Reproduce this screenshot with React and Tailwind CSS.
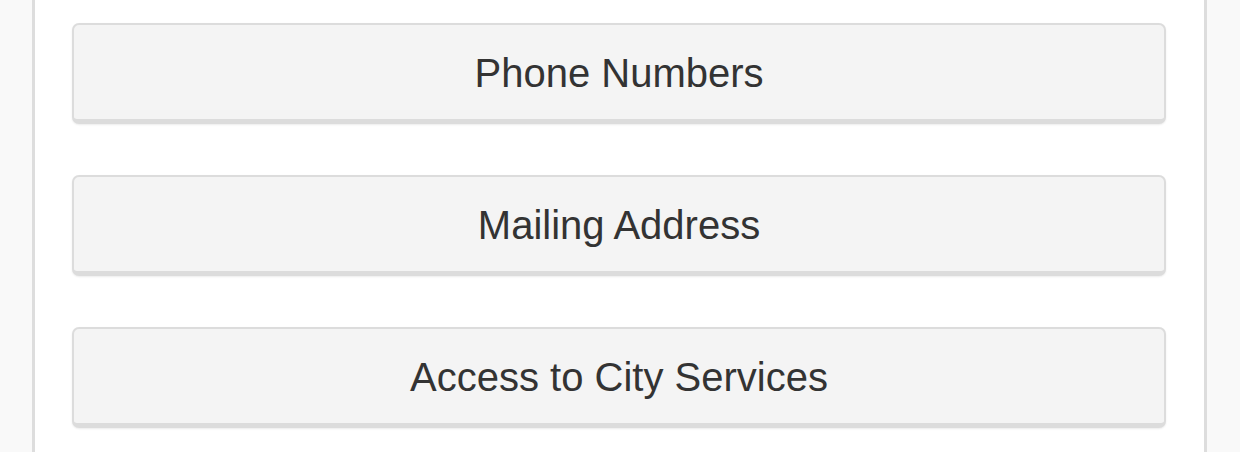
const links = ['Phone Numbers', 'Mailing Address', 'Access to City Services']

export default function App() {
  return (
    <div className="min-h-[452px] bg-[#f9f9f9] pl-[32px] pr-[33px] font-['Liberation_Sans',Arial,sans-serif]">
      <div className="min-h-[452px] border-x-[3px] border-[#dddddd] bg-white pl-[37px] pr-[38px] pt-[23px]">
        <div className="flex flex-col gap-[51px]">
          {links.map((label) => (
            <button
              key={label}
              type="button"
              className="flex h-[101px] w-full items-center justify-center rounded-[7px] border-2 border-b-[5px] border-[#dcdcdc] bg-[#f4f4f4] pt-[1px] text-[40px] leading-none text-[#333333] shadow-[0_1px_2px_rgba(0,0,0,0.08)]"
            >
              {label}
            </button>
          ))}
        </div>
      </div>
    </div>
  )
}
